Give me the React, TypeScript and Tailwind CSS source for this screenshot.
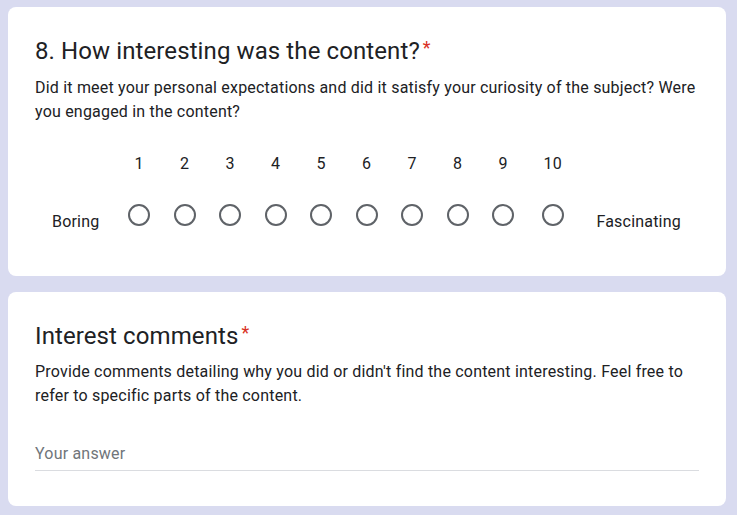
export default function App() {
  // scale 1..10 for the question
  const scale = [1, 2, 3, 4, 5, 6, 7, 8, 9, 10];

  return (
    <div className="min-h-[515px] w-[737px] bg-[#d9dbf0] pt-[7px] pb-[9px] font-['Roboto',sans-serif] text-[#202124]">
      {/* question card */}
      <div className="ml-2 w-[718px] rounded-lg bg-white px-[27px] pt-[28px] pb-[42px]">
        <div className="flex items-start text-[24px] leading-8 tracking-[0.1px]">
          <span>8. How interesting was the content?</span>
          <span className="pl-[3px] text-[18px] leading-[26px] text-[#d93025]">*</span>
        </div>
        <p className="mt-[9px] text-[16px] leading-6 tracking-[0.2px]">
          Did it meet your personal expectations and did it satisfy your curiosity of the subject? Were you engaged in the content?
        </p>

        <div className="mt-[28px] flex items-end text-[16px] leading-6 tracking-[0.2px]">
          <div className="px-[17px]">Boring</div>
          {scale.map((n) => (
            <div key={n} className={"flex flex-col items-center pb-2 " + (n === 10 ? "w-[53.5px]" : "w-[45.5px]")}>
              <div className="h-6">{n}</div>
              <div className="mt-[28px] h-[22px] w-[22px] rounded-full border-2 border-[#5f6368]" />
            </div>
          ))}
          <div className="px-[17px]">Fascinating</div>
        </div>
      </div>

      {/* comments card */}
      <div className="ml-2 mt-[16px] w-[718px] rounded-lg bg-white px-[27px] pt-[28px] pb-[35px]">
        <div className="flex items-start text-[24px] leading-8 tracking-[0.1px]">
          <span>Interest comments</span>
          <span className="pl-[3px] text-[18px] leading-[26px] text-[#d93025]">*</span>
        </div>
        <p className="mt-2 text-[16px] leading-6 tracking-[0.2px]">
          Provide comments detailing why you did or didn't find the content interesting. Feel free to refer to specific parts of the content.
        </p>
        <div className="mt-[34px] border-b border-[#dadce0] pb-1 text-[16px] leading-6 tracking-[0.2px] text-[#70757a]">
          Your answer
        </div>
      </div>
    </div>
  );
}
